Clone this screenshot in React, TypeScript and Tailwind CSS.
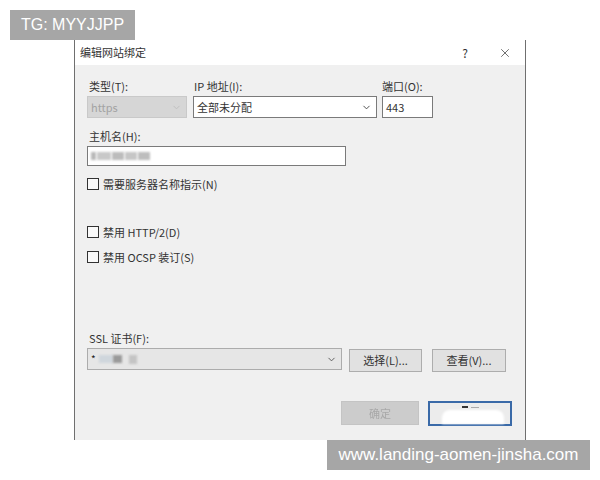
import { ChevronDown, X } from 'lucide-react'

const font = { fontFamily: '"Noto Sans CJK SC", "Noto Sans", sans-serif' }

function Check({ label, className = '' }: { label: string; className?: string }) {
  return (
    <div className={`flex items-center gap-[4px] ${className}`}>
      <div className="w-[12px] h-[12px] border border-[#333] bg-[#fafafa]" />
      <span className="text-[11px] leading-[14px] text-[#333]">{label}</span>
    </div>
  )
}

function Btn({ label, className = '' }: { label: string; className?: string }) {
  return (
    <div
      className={`h-[23px] flex items-center justify-center border border-[#adadad] bg-[#e1e1e1] text-[11px] text-[#333] ${className}`}
    >
      {label}
    </div>
  )
}

export default function App() {
  return (
    <div className="relative w-[600px] h-[480px] bg-white overflow-hidden" style={font}>
      {/* dialog */}
      <div className="ml-[74px] mt-[40px] w-[452px] h-[400px] border-x border-[#6f6f6f] flex flex-col">
        <div className="h-[25px] bg-white flex items-center pl-[5px] pr-[13px]">
          <span className="text-[11px] text-[#333] flex-1">编辑网站绑定</span>
          <span className="text-[12px] text-[#333] mr-[30px]">?</span>
          <X size={14} strokeWidth={1.2} className="text-[#333]" />
        </div>
        <div className="flex-1 bg-[#f0f0f0] pl-[12px] pt-[14px]">
          {/* row 1 */}
          <div className="flex gap-[6px]">
            <div className="w-[100px]">
              <div className="text-[11px] leading-[14px] text-[#333] pl-[2px]">类型(T):</div>
              <div className="mt-[3px] h-[22px] border border-[#c9c9c9] bg-[#d6d6d6] flex items-center pl-[3px] pr-[4px]">
                <span className="flex-1 text-[11px] text-[#a3a3a3]">https</span>
                <ChevronDown size={11} className="text-[#bdbdbd]" />
              </div>
            </div>
            <div className="w-[184px]">
              <div className="text-[11px] leading-[14px] text-[#333] pl-[1px]">IP 地址(I):</div>
              <div className="mt-[3px] h-[22px] border border-[#7a7a7a] bg-white flex items-center pl-[3px] pr-[4px]">
                <span className="flex-1 text-[11px] text-[#333]">全部未分配</span>
                <ChevronDown size={11} className="text-[#444]" />
              </div>
            </div>
            <div className="w-[50px]">
              <div className="text-[11px] leading-[14px] text-[#333] -ml-[1px]">端口(O):</div>
              <div className="mt-[3px] h-[22px] border border-[#7a7a7a] bg-white flex items-center pl-[3px] -ml-[1px]">
                <span className="text-[11px] text-[#333]">443</span>
              </div>
            </div>
          </div>

          {/* host */}
          <div className="mt-[11px] text-[11px] leading-[14px] text-[#333] pl-[2px]">主机名(H):</div>
          <div className="mt-[3px] w-[259px] h-[20px] border border-[#7a7a7a] bg-white flex items-center pl-[3px] gap-[1px]">
            <div className="w-[5px] h-[8px] bg-[#b8b8b8] blur-[1px]" />
            <div className="w-[14px] h-[8px] bg-[#c8c8c8] blur-[1px]" />
            <div className="w-[12px] h-[8px] bg-[#bcbcbc] blur-[1px]" />
            <div className="w-[12px] h-[8px] bg-[#c6c6c6] blur-[1px]" />
            <div className="w-[12px] h-[8px] bg-[#bdbdbd] blur-[1px]" />
          </div>

          <Check label="需要服务器名称指示(N)" className="mt-[11px]" />
          <Check label="禁用 HTTP/2(D)" className="mt-[34px]" />
          <Check label="禁用 OCSP 装订(S)" className="mt-[11px]" />

          {/* ssl */}
          <div className="mt-[67px] text-[11px] leading-[14px] text-[#333] pl-[2px]">SSL 证书(F):</div>
          <div className="mt-[3px] flex gap-[7px] items-start">
            <div className="w-[255px] h-[22px] border border-[#acacac] bg-[#e6e6e6] flex items-center pl-[3px] pr-[4px]">
              <span className="text-[10px] text-[#222] leading-none">*</span>
              <div className="ml-[3px] w-[14px] h-[8px] bg-[#cfd6dc] blur-[1px]" />
              <div className="w-[9px] h-[8px] bg-[#9a9a9a] blur-[1px]" />
              <div className="ml-[7px] w-[8px] h-[9px] bg-[#c4c4c4] blur-[1px]" />
              <div className="flex-1" />
              <ChevronDown size={11} className="text-[#555]" />
            </div>
            <Btn label="选择(L)..." className="mt-[1px] w-[73px]" />
            <Btn label="查看(V)..." className="mt-[1px] ml-[3px] w-[74px]" />
          </div>

          {/* ok / cancel */}
          <div className="mt-[29px] flex justify-end pr-[13px] gap-[9px]">
            <div className="w-[78px] h-[24px] bg-[#cccccc] border border-[#c4c4c4] flex items-center justify-center">
              <span className="text-[11px] text-[#a8a8a8] blur-[0.6px]">确定</span>
            </div>
            <div className="w-[84px] h-[25px] border-2 border-[#3a6aa8] bg-[#ececec] flex items-start justify-center pt-[3px] relative">
              <div className="flex gap-[3px] items-center">
                <div className="w-[6px] h-[2px] bg-[#333]" />
                <div className="w-[8px] h-[1px] bg-[#aaa]" />
              </div>
              <div className="absolute left-[12px] right-[6px] bottom-0 h-[14px] rounded-t-[8px] bg-white blur-[1px]" />
            </div>
          </div>
        </div>
      </div>

      {/* watermarks */}
      <div
        className="absolute left-[10px] top-[10px] w-[125px] h-[30px] bg-[#a6a6a6] flex items-center justify-center text-white text-[16px]"
        style={{ fontFamily: '"Liberation Sans", Arial, sans-serif' }}
      >
        TG: MYYJJPP
      </div>
      <div
        className="absolute left-[327px] top-[440px] w-[263px] h-[30px] bg-[#a6a6a6] flex items-center justify-center text-white text-[17px]"
        style={{ fontFamily: '"Liberation Sans", Arial, sans-serif' }}
      >
        www.landing-aomen-jinsha.com
      </div>
    </div>
  )
}
